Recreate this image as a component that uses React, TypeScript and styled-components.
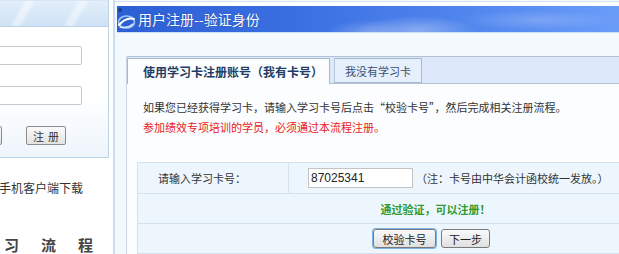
import styled, { createGlobalStyle } from 'styled-components'

const GlobalStyle = createGlobalStyle`
  html, body {
    margin: 0;
    padding: 0;
    background: #ffffff;
    overflow: hidden;
  }
  body {
    font-family: "Noto Sans CJK SC", "Liberation Sans", sans-serif;
    color: #333;
  }
`

const Page = styled.div`
  display: flex;
  width: 619px;
  height: 254px;
  overflow: hidden;
`

/* ---- left column (cut off by the window) ---- */

const LeftCol = styled.div`
  width: 109px;
  flex-shrink: 0;
  overflow: hidden;
  display: flex;
  flex-direction: column;
`

const LeftBox = styled.div`
  height: 158px;
  box-sizing: border-box;
  border-right: 1px solid #bcd4ea;
  border-bottom: 1px solid #bcd4ea;
  background: linear-gradient(to bottom, #ffffff 60%, #eef5fc);
  display: flex;
  flex-direction: column;
`

const LeftHeader = styled.div`
  height: 27px;
  box-sizing: border-box;
  border-bottom: 1px solid #b9d2ea;
  border-top: 1px solid #d7e6f4;
  background:
    repeating-linear-gradient(120deg, rgba(255,255,255,0) 0 20px, rgba(255,255,255,0.45) 24px 28px, rgba(255,255,255,0) 32px 46px),
    linear-gradient(to bottom, #e2eefa, #cfe2f5);
`

const LeftRow = styled.div<{ $top: number; $right: number; $gap?: number }>`
  display: flex;
  justify-content: flex-end;
  gap: ${p => p.$gap ?? 0}px;
  margin-top: ${p => p.$top}px;
  padding-right: ${p => p.$right}px;
  white-space: nowrap;
`

const LoginInput = styled.input`
  width: 130px;
  height: 19px;
  box-sizing: border-box;
  border: 1px solid #c8c8c8;
  border-radius: 2px;
  background: #fff;
  flex-shrink: 0;
`

const SmallButton = styled.button`
  width: 40px;
  height: 19px;
  flex-shrink: 0;
  box-sizing: border-box;
  padding: 0;
  border: 1px solid #8c8c8c;
  border-radius: 2px;
  background: linear-gradient(to bottom, #fbfbfb, #e2e2e2);
  font-family: "Noto Sans CJK SC", sans-serif;
  font-size: 11px;
  letter-spacing: 4px;
  text-indent: 4px;
  color: #333;
  line-height: 16px;
`

const SideLink = styled.div`
  font-size: 12px;
  color: #333;
  line-height: 16px;
`

const SpacedTitle = styled.span`
  font-size: 15px;
  font-weight: bold;
  color: #444;
  line-height: 18px;
  width: 15px;
  height: 18px;
  flex-shrink: 0;
`

/* ---- right panel ---- */

const RightPanel = styled.div`
  flex: 1;
  min-width: 0;
  margin-left: 4px;
  border-left: 2px solid #c9def3;
  background: #f4f9fe;
  display: flex;
  flex-direction: column;
  overflow: hidden;
`

const TopStrip = styled.div`
  height: 6px;
  box-sizing: border-box;
  border-top: 1px solid #d6e2ee;
  margin-top: 1px;
  background: #fbfdff;
`

const Header = styled.div`
  height: 31px;
  margin-left: 2px;
  display: flex;
  align-items: center;
  gap: 2px;
  background:
    radial-gradient(ellipse 60px 14px at 300px 24px, rgba(255,255,255,0.35), rgba(255,255,255,0)),
    radial-gradient(ellipse 40px 12px at 250px 26px, rgba(255,255,255,0.25), rgba(255,255,255,0)),
    radial-gradient(ellipse 80px 10px at 420px 14px, rgba(255,255,255,0.18), rgba(255,255,255,0)),
    linear-gradient(to right, #2c5fd4, #3a6fe2 35%, #5186ee 70%, #6a9cf8);
  border-bottom: 1px solid #cfe0f3;
`

const HeaderTitle = styled.span`
  color: #ffffff;
  font-size: 14px;
  line-height: 18px;
  text-shadow: 0 0 1px rgba(0, 0, 60, 0.5);
`

const Body = styled.div`
  flex: 1;
  margin-left: 11px;
  margin-top: 23px;
  border-left: 1px solid #c8d6e5;
  background: #fbfdff;
  display: flex;
  flex-direction: column;
`

const TabStrip = styled.div`
  height: 28px;
  box-sizing: border-box;
  border-top: 1px solid #b3c3d6;
  border-bottom: 1px solid #b3c3d6;
  background: #dde9fa;
  display: flex;
  align-items: flex-end;
  gap: 4px;
`

const Tab = styled.div<{ $active?: boolean; $width: number }>`
  width: ${p => p.$width}px;
  height: ${p => (p.$active ? 26 : 25)}px;
  margin-bottom: ${p => (p.$active ? -1 : 0)}px;
  box-sizing: border-box;
  border: 1px solid #a9b9cd;
  border-bottom: ${p => (p.$active ? 'none' : '1px solid #a9b9cd')};
  border-left: ${p => (p.$active ? '1px solid #a9b9cd' : '1px solid #b8c8da')};
  background: ${p => (p.$active ? '#fbfdff' : '#e6effc')};
  display: flex;
  align-items: center;
  justify-content: ${p => (p.$active ? 'flex-start' : 'center')};
  padding-left: ${p => (p.$active ? 15 : 0)}px;
  font-size: ${p => (p.$active ? 12 : 11)}px;
  font-weight: ${p => (p.$active ? 'bold' : 'normal')};
  color: ${p => (p.$active ? '#233d63' : '#3d4f6e')};
  white-space: nowrap;
`

const Intro = styled.div`
  padding: 13px 0 0 16px;
  font-size: 11px;
  line-height: 20px;
  white-space: nowrap;
`

const IntroLine = styled.div<{ $warn?: boolean }>`
  color: ${p => (p.$warn ? '#e8191b' : '#333')};
`

const Table = styled.div`
  margin: 25px 0 0 10px;
  width: 588px;
  display: grid;
  grid-template-columns: 151px 1fr;
  border-top: 1px solid #d4e1ee;
  border-left: 1px solid #d4e1ee;
  background: #eef6fd;
`

const Cell = styled.div<{ $span?: boolean; $height: number }>`
  grid-column: ${p => (p.$span ? '1 / 3' : 'auto')};
  height: ${p => p.$height}px;
  box-sizing: border-box;
  border-bottom: 1px solid #d4e1ee;
  border-right: 1px solid #d4e1ee;
  display: flex;
  align-items: center;
  justify-content: ${p => (p.$span ? 'center' : 'flex-start')};
  gap: 5px;
  font-size: 11px;
  white-space: nowrap;
`

const Label = styled.span`
  padding-left: 20px;
  color: #333;
`

const CardInput = styled.input`
  margin-left: 19px;
  width: 105px;
  height: 20px;
  box-sizing: border-box;
  border: 1px solid #c4c4c4;
  background: #fff;
  padding: 0 2px;
  font-family: "Liberation Sans", Arial, sans-serif;
  font-size: 12px;
  color: #222;
`

const Note = styled.span`
  color: #333;
  margin-left: -2px;
`

const Success = styled.span`
  color: #2f9a2f;
  font-weight: bold;
  font-size: 11px;
  margin-left: 8px;
`

const ActionButton = styled.button<{ $focus?: boolean; $width: number }>`
  width: ${p => p.$width}px;
  height: 19px;
  box-sizing: border-box;
  padding: 0;
  border: 1px solid #7a7a7a;
  border-radius: 3px;
  background: linear-gradient(to bottom, #fafafa, #e0e0e0);
  box-shadow: ${p => (p.$focus ? '0 0 0 1px #79b4e4' : 'none')};
  font-family: "Noto Sans CJK SC", sans-serif;
  font-size: 11px;
  line-height: 16px;
  color: #222;
`

function Logo() {
  return (
    <svg width='19' height='24' viewBox='0 0 19 24'>
      <circle cx='3' cy='3' r='2' fill='#1a3d8a' />
      <ellipse cx='9.5' cy='15' rx='8' ry='6' fill='none' stroke='#9fc3f5' strokeWidth='1.6' />
      <path d='M2 18 Q9 10 17 12' fill='none' stroke='#ffffff' strokeWidth='2' strokeLinecap='round' />
      <path d='M3 20 Q10 22 16 17' fill='none' stroke='#dbe9ff' strokeWidth='1.4' strokeLinecap='round' />
    </svg>
  )
}

function App() {
  return (
    <>
      <GlobalStyle />
      <Page>
        <LeftCol>
          <LeftBox>
            <LeftHeader />
            <LeftRow $top={19} $right={26}>
              <LoginInput />
            </LeftRow>
            <LeftRow $top={21} $right={26}>
              <LoginInput type='password' />
            </LeftRow>
            <LeftRow $top={21} $right={42} $gap={24}>
              {/* the login button sits mostly outside the window; only its edge shows */}
              <SmallButton aria-label='登录' />
              <SmallButton>注册</SmallButton>
            </LeftRow>
          </LeftBox>
          <LeftRow $top={22} $right={26}>
            <SideLink>手机客户端下载</SideLink>
          </LeftRow>
          <LeftRow $top={40} $right={16} $gap={22}>
            <SpacedTitle />
            <SpacedTitle>习</SpacedTitle>
            <SpacedTitle>流</SpacedTitle>
            <SpacedTitle>程</SpacedTitle>
          </LeftRow>
        </LeftCol>

        <RightPanel>
          <TopStrip />
          <Header>
            <Logo />
            <HeaderTitle>用户注册--验证身份</HeaderTitle>
          </Header>
          <Body>
            <TabStrip>
              <Tab $active $width={203}>使用学习卡注册账号（我有卡号）</Tab>
              <Tab $width={88}>我没有学习卡</Tab>
            </TabStrip>
            <Intro>
              <IntroLine>如果您已经获得学习卡，请输入学习卡号后点击“校验卡号”，然后完成相关注册流程。</IntroLine>
              <IntroLine $warn>参加绩效专项培训的学员，必须通过本流程注册。</IntroLine>
            </Intro>
            <Table>
              <Cell $height={31}>
                <Label>请输入学习卡号：</Label>
              </Cell>
              <Cell $height={31}>
                <CardInput defaultValue='87025341' />
                <Note>（注：卡号由中华会计函校统一发放。）</Note>
              </Cell>
              <Cell $span $height={30}>
                <Success>通过验证，可以注册！</Success>
              </Cell>
              <Cell $span $height={30}>
                <ActionButton $focus $width={63}>校验卡号</ActionButton>
                <ActionButton $width={49}>下一步</ActionButton>
              </Cell>
            </Table>
          </Body>
        </RightPanel>
      </Page>
    </>
  )
}

export default App
